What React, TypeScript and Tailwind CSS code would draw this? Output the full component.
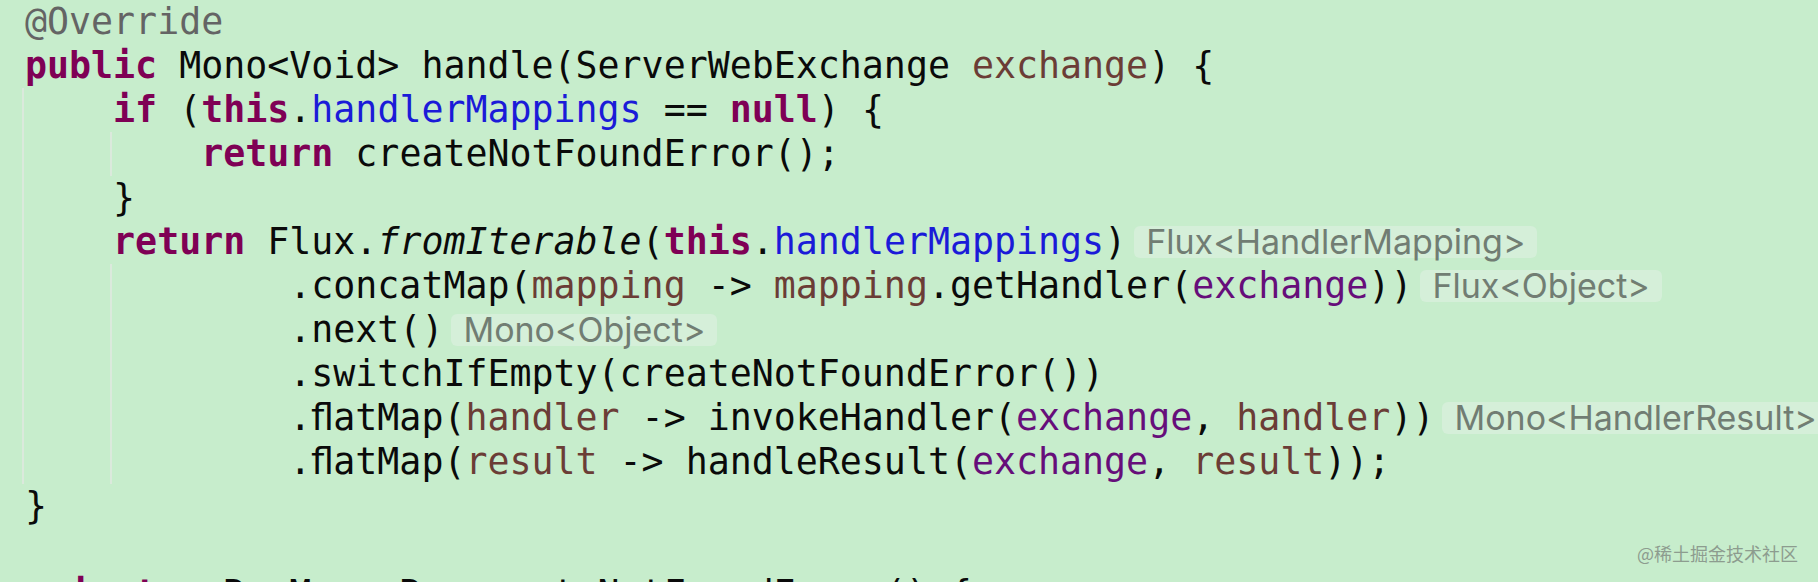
import React from 'react';

type Seg = [string, string?];

const kw = 'font-bold text-[#7f0055]';
const fld = 'text-[#1b1bd8]';
const prm = 'text-[#660e7a]';
const lam = 'text-[#6b3d36]';
const ann = 'text-[#646464]';
const ital = 'italic';

const Hint = ({ text }: { text: string }) => (
  <span className="ml-[8px] flex h-[32px] items-center rounded-[6px] bg-[#d5efd9] px-[12px] font-['Inter',sans-serif] text-[34px] leading-[32px] text-[#717d73]">
    {text}
  </span>
);

const Line = ({ segs, hint }: { segs: Seg[]; hint?: string }) => (
  <div className="flex h-[44px] items-center whitespace-pre">
    {segs.map(([t, c], i) => (
      <span key={i} className={c}>
        {t}
      </span>
    ))}
    {hint && <Hint text={hint} />}
  </div>
);

export default function App() {
  return (
    <div className="relative h-[582px] w-[1818px] overflow-hidden bg-[#c7edcc]">
      <div className="pl-[25px] font-['DejaVu_Sans_Mono',monospace] text-[36.6px] leading-[44px] text-[#0a0a0a]">
        <Line segs={[['@Override', ann]]} />
        <Line segs={[['public', kw], [' Mono<Void> handle(ServerWebExchange '], ['exchange', lam], [') {']]} />

        {/* method body guide */}
        <div className="-ml-[3px] border-l-2 border-[#dbe9dc] pl-[1px]">
          <Line
            segs={[['    '], ['if', kw], [' ('], ['this', kw], ['.'], ['handlerMappings', fld], [' == '], ['null', kw], [') {']]}
          />
          <div className="ml-[calc(4ch-3px)] border-l-2 border-[#dbe9dc] pl-[1px]">
            <Line segs={[['    '], ['return', kw], [' createNotFoundError();']]} />
          </div>
          <Line segs={[['    }']]} />
          <Line
            segs={[['    '], ['return', kw], [' Flux.'], ['fromIterable', ital], ['('], ['this', kw], ['.'], ['handlerMappings', fld], [')']]}
            hint="Flux<HandlerMapping>"
          />
          <div className="ml-[calc(4ch-3px)] border-l-2 border-[#dbe9dc] pl-[1px]">
            <Line
              segs={[['        .concatMap('], ['mapping', lam], [' -> '], ['mapping', lam], ['.getHandler('], ['exchange', prm], ['))']]}
              hint="Flux<Object>"
            />
            <Line segs={[['        .next()']]} hint="Mono<Object>" />
            <Line segs={[['        .switchIfEmpty(createNotFoundError())']]} />
            <Line
              segs={[['        .ﬂatMap('], ['handler', lam], [' -> invokeHandler('], ['exchange', prm], [', '], ['handler', lam], ['))']]}
              hint="Mono<HandlerResult>"
            />
            <Line
              segs={[['        .ﬂatMap('], ['result', lam], [' -> handleResult('], ['exchange', prm], [', '], ['result', lam], ['));']]}
            />
          </div>
        </div>

        <Line segs={[['}']]} />
        <Line segs={[['']]} />
        <Line segs={[['private', kw], [' <R> Mono<R> createNotFoundError() {']]} />
      </div>

      <div className="absolute bottom-[19px] right-[20px] font-['Noto_Sans_CJK_SC',sans-serif] text-[18px] leading-[20px] text-[#8d9c8f]">
        @稀土掘金技术社区
      </div>
    </div>
  );
}
